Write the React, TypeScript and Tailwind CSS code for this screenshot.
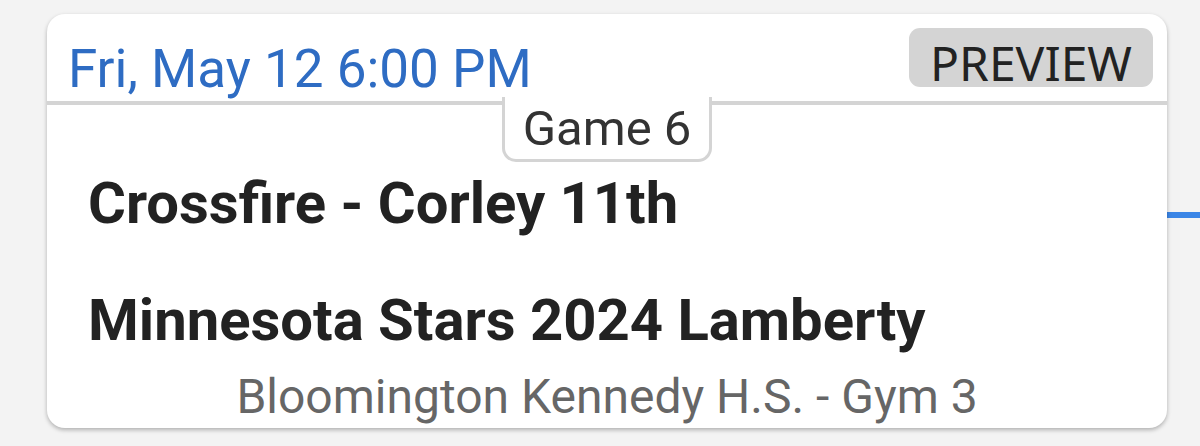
const game = {
  when: "Fri, May 12 6:00 PM",
  status: "PREVIEW",
  label: "Game 6",
  home: "Crossfire - Corley 11th",
  away: "Minnesota Stars 2024 Lamberty",
  venue: "Bloomington Kennedy H.S. - Gym 3",
};

export default function App() {
  return (
    <div className="relative h-[446px] w-full overflow-hidden bg-[#f3f3f3] font-['Roboto',sans-serif]">
      {/* bracket connector behind the card */}
      <div className="absolute left-[1160px] top-[212px] h-[6px] w-[40px] bg-[#3a85e6]" />

      <div className="relative z-10 ml-[47px] mt-[14px] flex h-[414px] w-[1120px] flex-col overflow-hidden rounded-[18px] bg-white shadow-[0_2px_4px_rgba(0,0,0,0.28)]">
        {/* Header */}
        <div className="flex h-[91px] shrink-0 items-start justify-between border-b-4 border-[#d4d4d4] pl-[21px] pr-[14px]">
          <div className="mt-[29px] text-[53px] leading-[53px] text-[#2e6cc3]">{game.when}</div>
          <div className="mt-[14px] flex h-[59px] w-[244px] items-center justify-center rounded-[11px] bg-[#d4d4d4] pt-[11px] font-['Noto_Sans',sans-serif] text-[48px] leading-[48px] text-[#222]">
            {game.status}
          </div>
        </div>

        {/* Game tab */}
        <div className="relative z-10 -mt-[8px] flex h-[65px] w-[210px] shrink-0 justify-center self-center rounded-b-[14px] border-x-[3px] border-b-[3px] border-[#d4d4d4] bg-white pt-[7px]">
          <span className="text-[49px] leading-[49px] text-[#333]">{game.label}</span>
        </div>

        {/* Teams */}
        <div className="mt-[12px] pl-[41px] text-[58px] font-bold leading-[58px] text-[#222]">{game.home}</div>
        <div className="mt-[59px] pl-[41px] text-[58px] font-bold leading-[58px] text-[#222]">{game.away}</div>

        {/* Venue */}
        <div className="mt-[24px] text-center text-[48px] leading-[48px] text-[#666]">{game.venue}</div>
      </div>
    </div>
  );
}
